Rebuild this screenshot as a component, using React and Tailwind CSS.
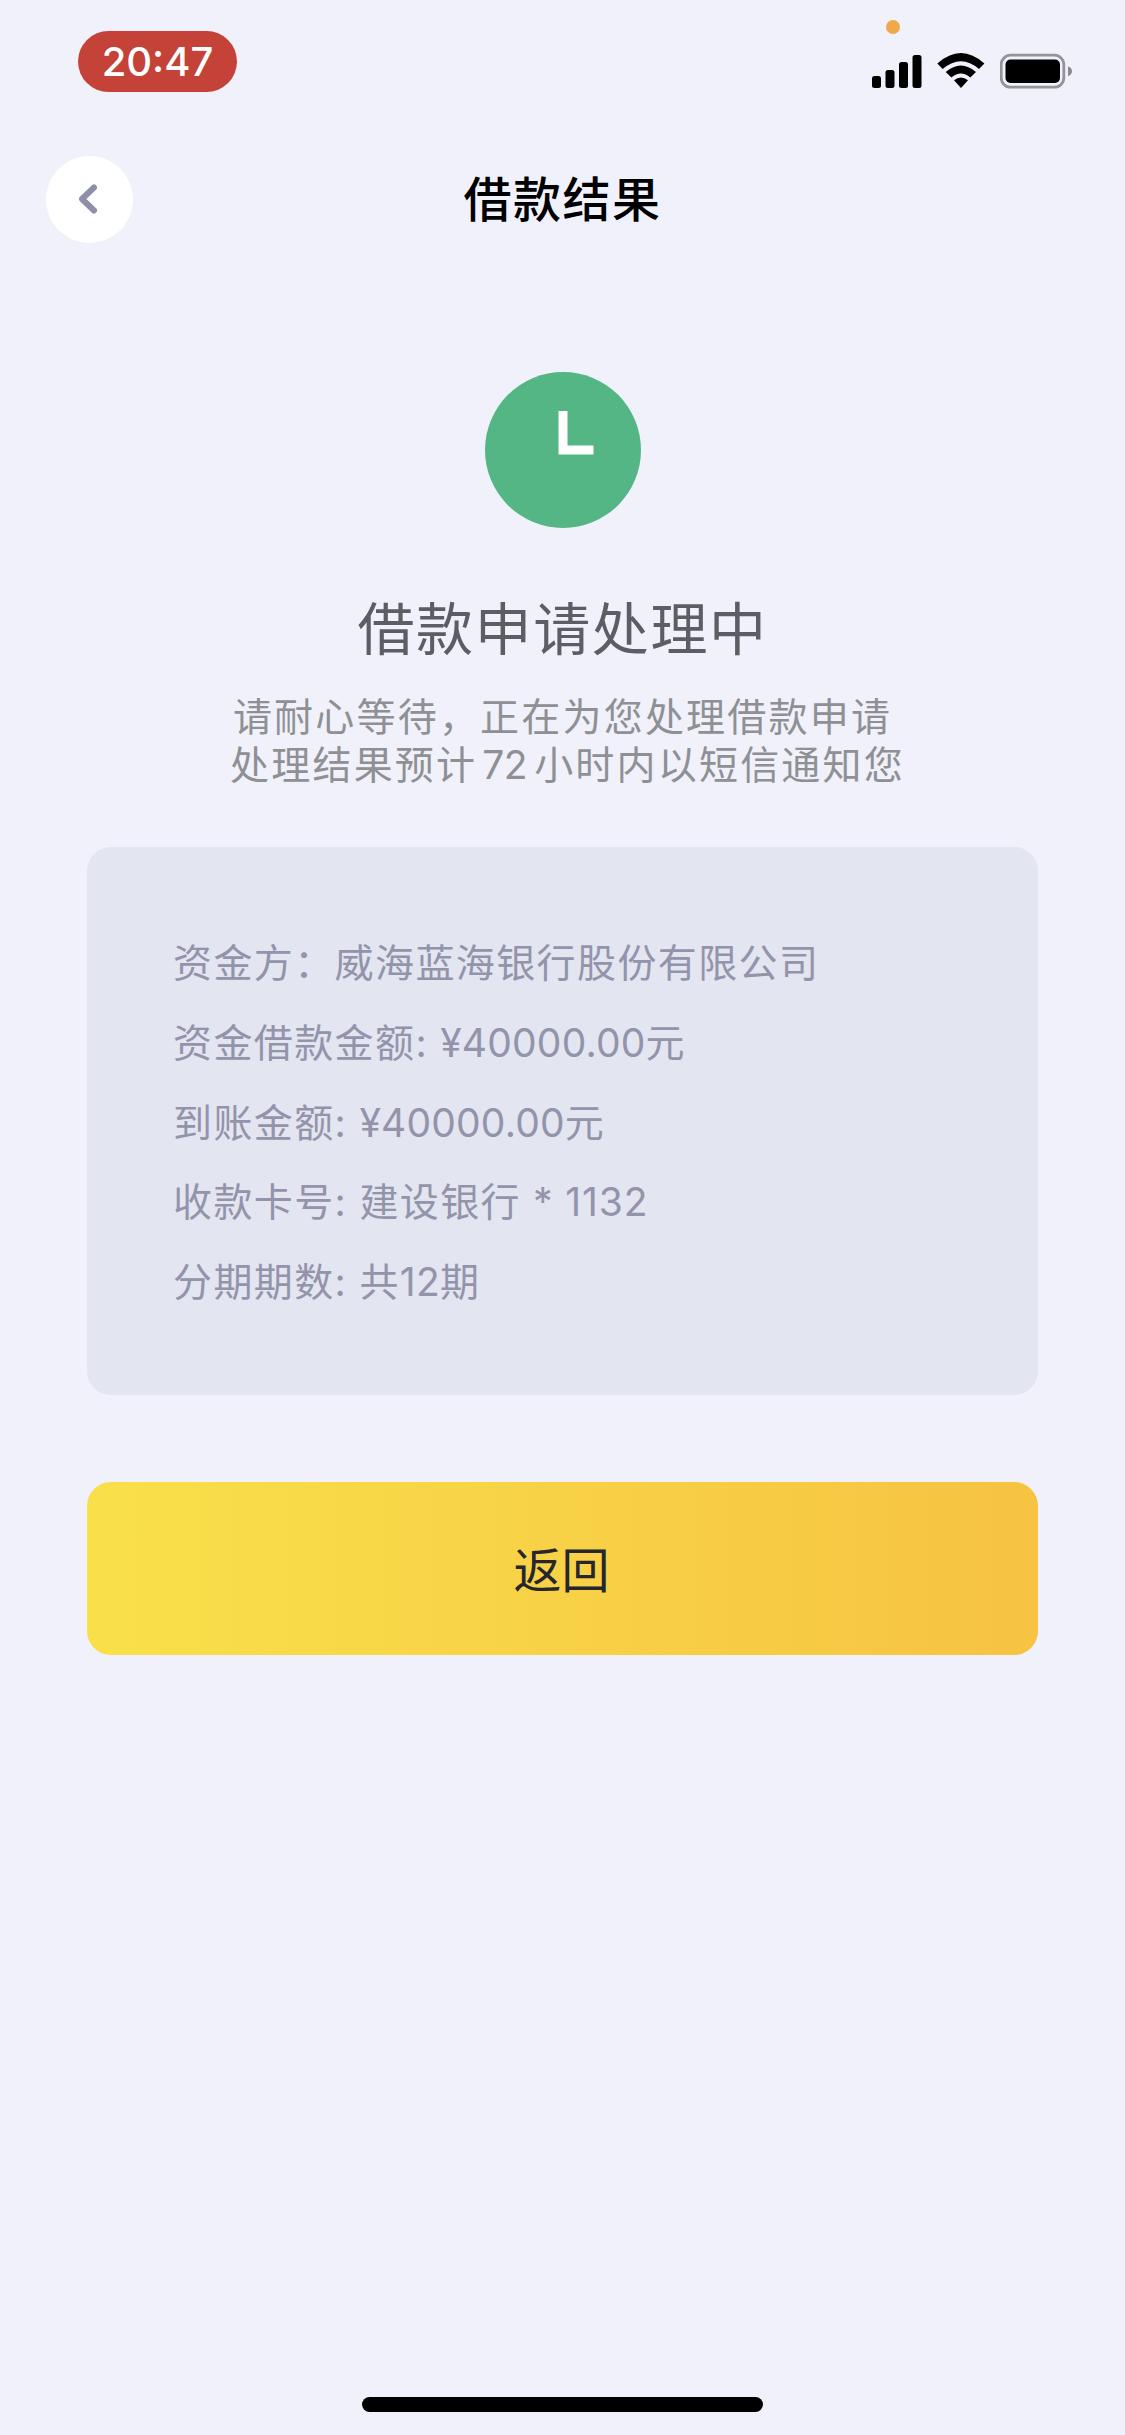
import { clsx } from 'clsx';

const DETAILS = [
  { label: '资金方：', parts: [{ text: '威海蓝海银行股份有限公司' }] },
  { label: '资金借款金额', colon: true, parts: [{ text: '¥40000.00', latin: true }, { text: '元' }] },
  { label: '到账金额', colon: true, parts: [{ text: '¥40000.00', latin: true }, { text: '元' }] },
  { label: '收款卡号', colon: true, parts: [{ text: '建设银行' }, { text: ' * 1132', latin: true, wide: true }] },
  { label: '分期期数', colon: true, parts: [{ text: '共' }, { text: '12', latin: true }, { text: '期' }] },
];

const StatusBar = () => (
  <div className="flex h-[124px] items-start justify-between pt-[20px] pr-[52px] pl-[78px]">
    <div className="mt-[11px] flex h-[61px] w-[159px] items-center justify-center rounded-full bg-[#c44237] font-['Inter',sans-serif] text-[40px] font-medium text-white">
      20:47
    </div>
    <div className="flex w-[201px] flex-col">
      <span className="ml-[14px] h-[14px] w-[14px] rounded-full bg-[#f0a94a]" />
      <div className="mt-[18px] flex h-[38px] items-center">
        <svg width="50" height="38" viewBox="0 0 50 38" className="shrink-0">
          <rect x="0" y="24" width="9" height="12" rx="2.5" />
          <rect x="13.5" y="18" width="9" height="18" rx="2.5" />
          <rect x="27" y="10" width="9" height="26" rx="2.5" />
          <rect x="40.5" y="3" width="9" height="33" rx="2.5" />
        </svg>
        <svg width="48" height="38" viewBox="0 0 48 38" className="ml-[15px] shrink-0">
          <path d="M0.3 11.5Q24 -9.5 47.4 11.5L42 17Q24 1.5 5.7 17Z" />
          <path d="M8.7 20Q24 7 39 20L33.3 25.5Q24 17.5 14.4 25.5Z" />
          <path d="M17 28.3Q24 22.5 31 28.3L24 36Z" />
        </svg>
        <svg width="74" height="38" viewBox="0 0 74 38" className="ml-[15px] shrink-0">
          <rect x="1.2" y="3.2" width="62.6" height="32" rx="9.5" fill="none" stroke="#939399" strokeWidth="2.8" />
          <rect x="5.5" y="7.5" width="54.5" height="23.5" rx="5" />
          <path d="M68 14.3c2.7 1 4 2.7 4 5s-1.300 4-4 5z" fill="#8a8a8f" />
        </svg>
      </div>
    </div>
  </div>
);

const Header = () => (
  <header className="grid h-[150px] grid-cols-[87px_1fr_87px] items-center px-[46px]">
    <button aria-label="返回" className="flex h-[87px] w-[87px] items-center justify-center rounded-full bg-white">
      <svg width="20" height="32" viewBox="0 0 20 32" className="mr-[3px]" fill="none" stroke="#8e8fa8" strokeWidth="6" strokeLinecap="round" strokeLinejoin="round">
        <path d="M16 4.500L4 16L16 27.500" />
      </svg>
    </button>
    <h1 className="pb-[6px] text-center text-[48px] font-medium tracking-[1.500px] text-black">借款结果</h1>
  </header>
);

const DetailRow = ({ label, colon, parts }) => (
  <div className="flex h-[79.700px] items-baseline text-[39px] leading-[79.700px] tracking-[1.400px] whitespace-pre text-[#9394ab]">
    <span>{label}</span>
    {colon && <span className="font-['Inter',sans-serif] tracking-[1.300px]">: </span>}
    {parts.map((part, i) => (
      <span
        key={i}
        className={clsx(
          part.latin && "font-['Inter',sans-serif]",
          part.latin && (part.wide ? 'tracking-[0.900px]' : 'tracking-[0.200px]'),
        )}
      >
        {part.text}
      </span>
    ))}
  </div>
);

export default function App() {
  return (
    <div className="flex h-[2435px] w-[1125px] flex-col overflow-hidden bg-[#f0f1fa] font-['Noto_Sans_CJK_SC',sans-serif]">
      <StatusBar />
      <Header />
      <main className="flex flex-col items-center px-[87px] pt-[98px]">
        <svg width="156" height="156" viewBox="0 0 156 156">
          <circle cx="78" cy="78" r="78" fill="#54b684" />
          <path d="M73.500 39h9v34.500h26v9h-35z" fill="#fff" />
        </svg>
        <h2 className="mt-[57px] text-[57px] leading-[80px] tracking-[1.600px] text-[#5d5e63]">借款申请处理中</h2>
        <div className="mt-[25px] flex flex-col items-center text-[39px] leading-[48px] tracking-[2.200px] whitespace-nowrap text-[#8f9094]">
          <p>请耐心等待，正在为您处理借款申请</p>
          <p className="ml-[10px]">
            处理结果预计
            <span className="mr-[7px] ml-[5px] font-['Inter',sans-serif] tracking-[-0.500px]">72</span>
            小时内以短信通知您
          </p>
        </div>
        <section className="mt-[58px] flex h-[548px] w-full flex-col justify-center rounded-[24px] bg-[#e3e5f0] px-[86px] pb-px">
          {DETAILS.map((row) => (
            <DetailRow key={row.label} {...row} />
          ))}
        </section>
        <button className="mt-[87px] h-[173px] w-full rounded-[24px] bg-linear-to-r from-[#f9e04a] to-[#f6c342] pr-[2px] pb-[4px] text-[48px] text-[#25262e]">
          返回
        </button>
      </main>
      <div className="mx-auto mt-auto mb-[23px] h-[15px] w-[401px] rounded-full bg-black" />
    </div>
  );
}
